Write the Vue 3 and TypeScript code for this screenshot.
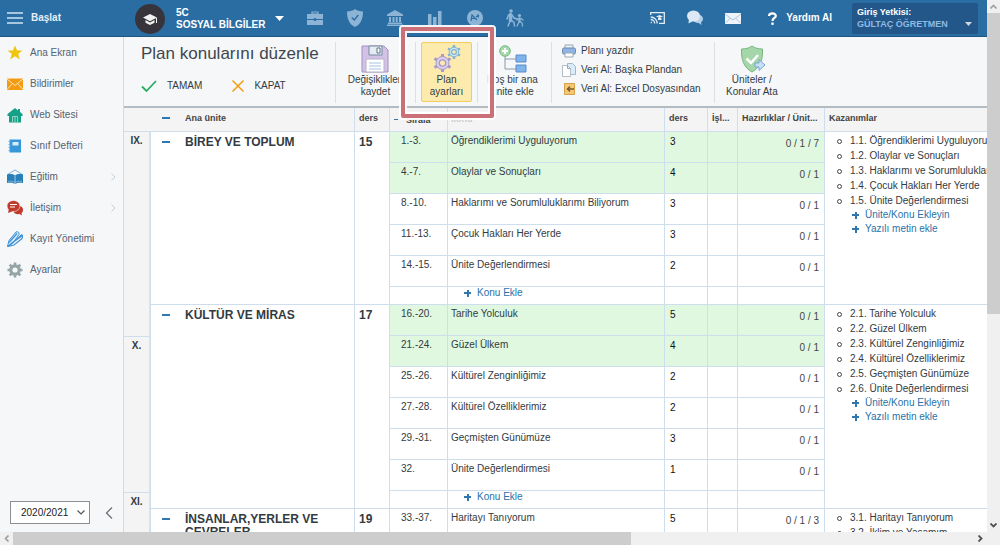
<script setup lang="ts">
import { ref } from 'vue'

interface Topic { range: string; name: string; hours: number; prep: string; done?: boolean }
interface Unit { id: number; name: string; hours: number; topics: Topic[] }

const menu = [
  { icon: 'star', label: 'Ana Ekran' },
  { icon: 'mail', label: 'Bildirimler' },
  { icon: 'home', label: 'Web Sitesi' },
  { icon: 'book', label: 'Sınıf Defteri' },
  { icon: 'edu', label: 'Eğitim', sub: true },
  { icon: 'talk', label: 'İletişim', sub: true },
  { icon: 'pens', label: 'Kayıt Yönetimi' },
  { icon: 'gear', label: 'Ayarlar' },
]

const units: Unit[] = [
  {
    id: 1, name: 'BİREY VE TOPLUM', hours: 15, topics: [
      { range: '1.-3.', name: 'Öğrendiklerimi Uyguluyorum', hours: 3, prep: '0 / 1 / 7', done: true },
      { range: '4.-7.', name: 'Olaylar ve Sonuçları', hours: 4, prep: '0 / 1', done: true },
      { range: '8.-10.', name: 'Haklarımı ve Sorumluluklarımı Biliyorum', hours: 3, prep: '0 / 1' },
      { range: '11.-13.', name: 'Çocuk Hakları Her Yerde', hours: 3, prep: '0 / 1' },
      { range: '14.-15.', name: 'Ünite Değerlendirmesi', hours: 2, prep: '0 / 1' },
    ],
  },
  {
    id: 2, name: 'KÜLTÜR VE MİRAS', hours: 17, topics: [
      { range: '16.-20.', name: 'Tarihe Yolculuk', hours: 5, prep: '0 / 1', done: true },
      { range: '21.-24.', name: 'Güzel Ülkem', hours: 4, prep: '0 / 1', done: true },
      { range: '25.-26.', name: 'Kültürel Zenginliğimiz', hours: 2, prep: '0 / 1' },
      { range: '27.-28.', name: 'Kültürel Özelliklerimiz', hours: 2, prep: '0 / 1' },
      { range: '29.-31.', name: 'Geçmişten Günümüze', hours: 3, prep: '0 / 1' },
      { range: '32.', name: 'Ünite Değerlendirmesi', hours: 1, prep: '0 / 1' },
    ],
  },
  {
    id: 3, name: 'İNSANLAR,YERLER VE ÇEVRELER', hours: 19, topics: [
      { range: '33.-37.', name: 'Haritayı Tanıyorum', hours: 5, prep: '0 / 1 / 3' },
      { range: '38.-42.', name: 'İklim ve Yaşamım', hours: 5, prep: '0 / 1' },
    ],
  },
]

const months = [
  { name: 'IX.', weeks: 205 },
  { name: 'X.', weeks: 156 },
  { name: 'XI.', weeks: 100 },
]

const year = ref('2020/2021')
</script>

<template>
  <div class="window">
    <div class="page">
      <header class="topbar">
        <button class="start">
          <svg width="16" height="12" viewBox="0 0 16 12"><path d="M0 1h16M0 6h16M0 11h16" stroke="#cfe2f2" stroke-width="1.6" /></svg>
          Başlat
        </button>
        <button class="course">
          <svg width="30" height="30" viewBox="0 0 30 30">
            <circle cx="15" cy="15" r="15" fill="#37353b" />
            <path d="M15 10l7 3.6-7 3.6-7-3.6zM10.500 16l4.500 2.400 4.500-2.400v2.800L15 21l-4.500-2.200zM21 14h1v5h-1z" fill="#f2f2f2" />
          </svg>
          <span class="course-name">5C<br />SOSYAL BİLGİLER</span>
          <svg width="9" height="5" viewBox="0 0 9 5"><path d="M0 0h9L4.500 5z" fill="#fff" /></svg>
        </button>
        <nav class="quick">
          <button aria-label="Çanta"><svg width="16" height="15" viewBox="0 0 16 15"><path d="M5 3V1h6v2M5.500 3h5" fill="none" stroke="#8db4d5" stroke-width="1.2" /><path d="M0 3h16v5H9.500a1.600 1.600 0 0 0-3 0H0zM0 9h6.500a1.600 1.600 0 0 0 3 0H16v5H0z" fill="#8db4d5" /></svg></button>
          <button aria-label="Güvenlik"><svg width="16" height="18" viewBox="0 0 16 18"><path d="M8 0c2 1.800 5 2.400 8 2.400C16 9.500 14 15 8 18 2 15 0 9.500 0 2.400 3 2.400 6 1.800 8 0z" fill="#8db4d5" /><path d="M4.800 8.500L7.300 11l4-5" fill="none" stroke="#2a6da3" stroke-width="1.4" /></svg></button>
          <button aria-label="Kurum"><svg width="16" height="16" viewBox="0 0 16 16"><path d="M8 0l8 4.500V6H0V4.500zM2 7h2v5H2zM5.500 7h2v5h-2zM8.700 7h2v5h-2zM12 7h2v5h-2zM1 12.500h14V14H1zM0 14.500h16V16H0z" fill="#8db4d5" /></svg></button>
          <button aria-label="İstatistik"><svg width="14" height="14" viewBox="0 0 14 14"><path d="M0 3h3.500v11H0zM5 6h3.500v8H5zM10 0h3.500v14H10z" fill="#8db4d5" /></svg></button>
          <button aria-label="Sınav"><svg width="16" height="16" viewBox="0 0 16 16"><circle cx="8" cy="8" r="8" fill="#8db4d5" /><path d="M4 11l1-6 5 5M5 8.500h3M9 7l3-2M10.500 4.500l1 3" fill="none" stroke="#2a6da3" stroke-width="1.2" /></svg></button>
          <button aria-label="Veliler"><svg width="18" height="18" viewBox="0 0 18 18" fill="none" stroke="#8db4d5" stroke-linecap="round"><circle cx="5" cy="2" r="1.800" fill="#8db4d5" stroke="none" /><circle cx="13.500" cy="6.500" r="1.600" fill="#8db4d5" stroke="none" /><path d="M4.500 5.500v6" stroke-width="3.400" /><path d="M4.500 11l-2.500 6M5 11l3 2.500.5 3.500M6 6l2 3 3 1M2.500 6L1 10" stroke-width="1.500" /><path d="M13.500 9.500v3" stroke-width="2.400" /><path d="M13.500 12l-2.500 5M13.500 12l2.500 2 .500 3M15 9.500l2 1.500M12.500 9.500L11 11" stroke-width="1.300" /></svg></button>
        </nav>
        <div class="tools">
          <button aria-label="Yayın"><svg width="15" height="12" viewBox="0 0 15 12" fill="none" stroke="#e4eef7" stroke-width="1.300"><path d="M.700 3V.700h13.600v10.600H9M.700 10.500h1.200M.700 7.500a4 4 0 0 1 4 4M.700 5a6.500 6.500 0 0 1 6.500 6.500" /><path d="M6 4.500L9.500 3 13 4.500 9.500 6zM8 6v2h3.500V6" fill="#e4eef7" stroke="none" /></svg></button>
          <button aria-label="Sohbet"><svg width="16" height="16" viewBox="0 0 16 16"><path d="M12 4.500c2.500.800 4 2.400 4 4.300 0 1.400-.700 2.600-2 3.400l.500 2.800-2.800-2c-2 0-3.700-.600-4.700-1.800z" fill="#b4cfe8" /><ellipse cx="6.500" cy="6" rx="6.500" ry="5.600" fill="#dce9f5" /><path d="M2 9l-.500 4.500L6 11z" fill="#dce9f5" /></svg></button>
          <button aria-label="Mesajlar"><svg width="16" height="11" viewBox="0 0 16 11"><path d="M0 0h16v11H0z" fill="#eef4fa" /><path d="M0 1l8 6 8-6M0 10.500L5.500 5M16 10.500L10.500 5" fill="none" stroke="#a9c4dd" /></svg></button>
        </div>
        <button class="help"><svg width="9" height="13" viewBox="0 0 9 13"><path d="M1 4C1 .500 8 .500 7.800 4 7.700 6 4.500 6 4.500 9" fill="none" stroke="#fff" stroke-width="2.200" /><rect x="3.300" y="10.500" width="2.400" height="2.400" fill="#fff" /></svg>Yardım Al</button>
        <button class="role">
          <span class="role-text"><span>Giriş Yetkisi:</span><span class="role-name">GÜLTAÇ ÖĞRETMEN</span></span>
          <svg width="7" height="4" viewBox="0 0 7 4"><path d="M0 0h7L3.500 4z" fill="#d0d8df" /></svg>
        </button>
      </header>

      <div class="body">
        <aside class="sidebar">
          <nav>
            <a v-for="m in menu" :key="m.label" href="#" class="menu-item">
              <svg width="16" height="16" viewBox="0 0 16 16">
                <path v-if="m.icon === 'star'" d="M8 .500l2.100 5h5.400l-4.300 3.400 1.600 5.600L8 11.200l-4.800 3.300 1.600-5.600L.500 5.500h5.400z" fill="#f1c40f" />
                <g v-else-if="m.icon === 'mail'"><path d="M0 2.500h16v11.500H0z" fill="#f39c12" /><path d="M0 3l8 6.500L16 3M0 13.500l5.500-6M16 13.500l-5.500-6" fill="none" stroke="#fbe3bd" /></g>
                <g v-else-if="m.icon === 'home'"><path d="M8 1L.500 7v2H2v6.500h12V9h1.500V7L13 5V2h-2v1.500z" fill="#16a085" /><path d="M5.500 15.500V9.500h5v6M8 10v5.500" fill="none" stroke="#8fd6c7" /></g>
                <g v-else-if="m.icon === 'book'"><path d="M2.500 1.500h11.500v13H2.500z" fill="#3498db" /><path d="M5.500 4h6v3.500h-6z" fill="#d8ecf9" /><path d="M1.500 3.500h2M1.500 6.500h2M1.500 9.500h2M1.500 12.500h2" stroke="#6fb3e4" /></g>
                <g v-else-if="m.icon === 'edu'"><path d="M.500 5.500L8 1l7.500 4.500" fill="none" stroke="#79b3dc" /><path d="M0 5.500c3-.800 6-.500 8 1 2-1.500 5-1.800 8-1V14c-3-.500-6-.500-8 1-2-1.500-5-1.500-8-1z" fill="#2980b9" /><path d="M8 6.500V15" stroke="#bcdcf2" stroke-width=".8" /><path d="M1 12.500c3-.500 5-.300 7 1 2-1.300 4-1.500 7-1" fill="none" stroke="#8cc0e4" stroke-width=".7" /></g>
                <g v-else-if="m.icon === 'talk'"><path d="M13 6c2 .500 3 2 3 4 0 1.300-.500 2.200-1.500 3l.500 2.500-2.500-1.500c-3 .500-5.500-.500-6-2.500z" fill="#c0392b" /><ellipse cx="6.500" cy="6" rx="6.500" ry="5.500" fill="#c0392b" stroke="#f5f7f9" stroke-width=".6" /><path d="M2 8.500L1 13l5-2z" fill="#c0392b" /><path d="M3 4.500h7M3 7h5" stroke="#fff" /></g>
                <g v-else-if="m.icon === 'pens'" fill="none" stroke="#3f92d6"><path d="M.500 15.500l1.500-6L9 1c2-1 3.500.500 3 2.500L6 12z" fill="#d7eafa" /><path d="M.500 15.500l5-3.500 9.500-8.500M2 11.500L10 2.500M3.500 13L15.500 4.500c.500 2-.500 3-1 3.500L7 14l-6.500 1.500" stroke-width="1.200" /></g>
                <g v-else><circle cx="8" cy="8" r="4.200" fill="none" stroke="#95a5a6" stroke-width="3.200" /><path d="M8 .500v3M8 12.500v3M.500 8h3M12.500 8h3M2.700 2.700l2 2M11.300 11.300l2 2M2.700 13.300l2-2M11.300 4.700l2-2" stroke="#95a5a6" stroke-width="2.600" /></g>
              </svg>
              <span class="menu-label">{{ m.label }}</span>
              <svg v-if="m.sub" width="5" height="8" viewBox="0 0 5 8"><path d="M.500.500L4 4 .500 7.500" fill="none" stroke="#c9ced3" /></svg>
            </a>
          </nav>
          <div class="side-foot">
            <label class="year">
              <select v-model="year" aria-label="Öğretim yılı"><option>2020/2021</option></select>
              <svg width="8" height="5" viewBox="0 0 8 5"><path d="M.500.500L4 4 7.500.500" fill="none" stroke="#555" stroke-width="1.200" /></svg>
            </label>
            <button class="collapse" aria-label="Daralt"><svg width="8" height="12" viewBox="0 0 8 12"><path d="M7 .500L1.500 6 7 11.500" fill="none" stroke="#6b7379" stroke-width="1.300" /></svg></button>
          </div>
        </aside>

        <main class="content">
          <section class="toolbar">
            <div class="heading">
              <h1>Plan konularını düzenle</h1>
              <div class="actions">
                <button><svg width="16" height="12" viewBox="0 0 16 12"><path d="M1 6.500L5.500 11 15 1" fill="none" stroke="#27ae60" stroke-width="1.800" /></svg>TAMAM</button>
                <button><svg width="12" height="12" viewBox="0 0 12 12"><path d="M.500.500l11 11M11.500.500l-11 11" fill="none" stroke="#f39c12" stroke-width="1.500" /></svg>KAPAT</button>
              </div>
            </div>
            <div class="group save">
              <button class="big"><svg width="28" height="28" viewBox="0 0 28 28"><path d="M1 1h22l4 4v22H1z" fill="#d3c2e6" stroke="#a48fc0" /><path d="M8 1h13v9H8z" fill="#e6ecf2" stroke="#7488a0" /><path d="M16 3h3v5h-3z" fill="#fff" stroke="#5d7590" /><path d="M5 14h18v13H5z" fill="#fff" stroke="#b5b0c8" /><path d="M8 18h12M8 21h12M8 24h12" stroke="#a5c3de" /></svg><span>Değişiklikleri<br />kaydet</span></button>
            </div>
            <div class="group settings">
              <button class="big active"><svg width="28" height="28" viewBox="0 0 28 28">
                <g fill="none" stroke="#a899c8"><path d="M9.500 9v3M9.500 24v3M1.500 13.500l3 1.700M14.500 20.700l3 1.700M1.500 22.500l3-1.700M14.500 15.200l3-1.700" stroke-width="3" /><circle cx="9.500" cy="18" r="6.500" fill="#d9cfee" /><circle cx="9.500" cy="18" r="3.200" fill="#fdebae" stroke-width="1.300" /></g>
                <g fill="none" stroke="#7fb2cf"><path d="M21 0v2M21 12v2M15 3.500l1.800 1M25.200 9.500l1.800 1M15 10.500l1.800-1M25.200 4.500l1.800-1" stroke-width="2.500" /><circle cx="21" cy="7" r="4.800" fill="#c9e6f5" /><circle cx="21" cy="7" r="2.400" fill="#fdebae" stroke-width="1.200" /></g>
              </svg><span>Plan<br />ayarları</span></button>
              <span class="callout"></span>
            </div>
            <div class="group add">
              <button class="big"><svg width="28" height="28" viewBox="0 0 28 28"><path d="M6 10v14h11M6 14h11" fill="none" stroke="#8a9aa8" /><path d="M17 10h10v7H17zM17 20h10v7H17z" fill="#7fb3ea" stroke="#5a8ccb" /><circle cx="6" cy="6" r="5.300" fill="#a6d9ab" stroke="#77b780" /><path d="M6 3v6M3 6h6" stroke="#fff" stroke-width="1.800" /></svg><span>Boş bir ana<br />ünite ekle</span></button>
            </div>
            <div class="group imports">
              <button><svg width="14" height="14" viewBox="0 0 14 14"><path d="M3 1h8v4H3z" fill="#eef3f7" stroke="#9ba7b2" /><rect x=".5" y="4" width="13" height="6" rx="1.500" fill="#8fb5e6" stroke="#6c87aa" /><path d="M3 9h8v4H3z" fill="#fff" stroke="#9ba7b2" /></svg>Planı yazdır</button>
              <button><svg width="14" height="14" viewBox="0 0 14 14"><path d="M5.500.500h5l3 3v8h-8z" fill="#d9ecfa" stroke="#9cb9cf" /><path d="M.500 2.500h5l3 3v8h-8z" fill="#fff" stroke="#b5bec6" /><path d="M5.500 2.500v3h3" fill="none" stroke="#8fa5b8" /></svg>Veri Al: Başka Plandan</button>
              <button><svg width="14" height="14" viewBox="0 0 14 14"><path d="M2.500 1.500h10v11h-10z" fill="#f7c873" stroke="#d5a048" /><path d="M12 7H5.500M8 4.500L5.500 7 8 9.500" fill="none" stroke="#7c5a2c" stroke-width="1.500" /></svg>Veri Al: Excel Dosyasından</button>
            </div>
            <div class="group assign">
              <button class="big"><svg width="28" height="28" viewBox="0 0 28 28"><path d="M14 1c3 2.200 6.500 3 10.500 3C25 14 22.500 22.500 14 27 5.500 22.500 3 14 3.500 4 7.500 4 11 3.200 14 1z" fill="#a5d6a9" stroke="#79b67f" /><path d="M8.500 13.500l4.500 4.500 7-8" fill="none" stroke="#fff" stroke-width="2.500" /><path d="M17 18h4v-3.500l6 5.500-6 5.500V22h-4z" fill="#c5e1f7" stroke="#7aa5cf" /></svg><span>Üniteler /<br />Konular Ata</span></button>
            </div>
          </section>

          <section class="plan">
            <div class="months">
              <div class="month-head"></div>
              <div v-for="m in months" :key="m.name" class="month" :style="{ height: m.weeks + 'px' }">{{ m.name }}</div>
            </div>
            <table>
              <colgroup><col class="c-unit" /><col class="c-h" /><col class="c-no" /><col class="c-topic" /><col class="c-hours" /><col class="c-done" /><col class="c-prep" /><col /></colgroup>
              <thead>
                <tr>
                  <th><span class="unit-cell"><i class="minus"></i>Ana ünite</span></th>
                  <th>ders</th>
                  <th class="no-head"><span class="no-cell"><i class="minus small"></i>Sırala</span></th>
                  <th class="faint">konu</th>
                  <th>ders</th>
                  <th>İşl...</th>
                  <th>Hazırlıklar / Ünit...</th>
                  <th>Kazanımlar</th>
                </tr>
              </thead>
              <tbody v-for="u in units" :key="u.id">
                <tr v-for="(t, i) in u.topics" :key="t.range" :class="{ done: t.done }">
                  <td v-if="i === 0" :rowspan="u.topics.length + 1" class="unit"><span class="unit-cell"><i class="minus"></i><span>{{ u.name }}</span></span></td>
                  <td v-if="i === 0" :rowspan="u.topics.length + 1" class="unit hours-total">{{ u.hours }}</td>
                  <td class="no">{{ t.range }}</td>
                  <td class="topic">{{ t.name }}</td>
                  <td class="hours">{{ t.hours }}</td>
                  <td></td>
                  <td class="prep">{{ t.prep }}</td>
                  <td v-if="i === 0" :rowspan="u.topics.length + 1" class="goals">
                    <ul>
                      <li v-for="(g, n) in u.topics" :key="g.range">{{ u.id }}.{{ n + 1 }}. {{ g.name }}</li>
                    </ul>
                    <a href="#"><i class="plus"></i>Ünite/Konu Ekleyin</a>
                    <a href="#"><i class="plus"></i>Yazılı metin ekle</a>
                  </td>
                </tr>
                <tr class="add-row">
                  <td></td>
                  <td><a href="#"><i class="plus"></i>Konu Ekle</a></td>
                  <td></td><td></td><td></td>
                </tr>
              </tbody>
            </table>
          </section>
        </main>
      </div>
    </div>

    <div class="bar vertical">
      <button aria-label="Yukarı"><svg width="7" height="5" viewBox="0 0 7 5"><path d="M.500 4.500l3-3 3 3" fill="none" stroke="#a0a0a0" stroke-width="1.600" /></svg></button>
      <div class="track"><div class="thumb"></div></div>
      <button aria-label="Aşağı"><svg width="7" height="5" viewBox="0 0 7 5"><path d="M.500.500l3 3 3-3" fill="none" stroke="#505050" stroke-width="1.800" /></svg></button>
    </div>
    <div class="bar horizontal">
      <button aria-label="Sola"><svg width="5" height="7" viewBox="0 0 5 7"><path d="M4.500.500l-3 3 3 3" fill="none" stroke="#a0a0a0" stroke-width="1.600" /></svg></button>
      <div class="track"><div class="thumb"></div></div>
      <button aria-label="Sağa"><svg width="5" height="7" viewBox="0 0 5 7"><path d="M.500.500l3 3-3 3" fill="none" stroke="#505050" stroke-width="1.800" /></svg></button>
    </div>
    <div class="corner"></div>
  </div>
</template>

<style>
body { margin: 0; overflow: hidden; }
</style>

<style scoped>
.window {
  height: 100vh;
  display: grid;
  grid-template: minmax(0, 1fr) 13px / minmax(0, 1fr) 13px;
  font: 10px/12px "Liberation Sans", Arial, sans-serif;
  color: #333b42;
}
* { box-sizing: border-box; }
button { border: 0; padding: 0; margin: 0; background: none; font: inherit; color: inherit; display: flex; align-items: center; }
a { text-decoration: none; color: #2a71a8; }
svg { flex: none; display: block; }

.page { display: flex; flex-direction: column; overflow: hidden; }
.topbar { height: 37px; flex: none; display: flex; align-items: center; background: #2a6da3; border-bottom: 1px solid #1d5684; color: #fff; font-weight: bold; padding-right: 9px; }
.start { gap: 8px; margin-left: 7px; width: 128px; color: #e3eef8; }
.course { gap: 11px; width: 160px; text-align: left; padding-top: 2px; }
.course svg:last-child { margin-left: -1px; margin-bottom: 2px; }
.quick { display: flex; flex: 1; }
.quick button { width: 40px; justify-content: center; }
.tools { display: flex; }
.tools button { width: 38px; justify-content: center; }
.help { gap: 9px; margin: 0 20px 0 16px; }
.role { width: 126px; height: 31px; background: #23578a; border-radius: 2px; padding: 0 6px 0 5px; font-size: 9px; text-align: left; justify-content: space-between; }
.role svg { margin-top: 12px; }
.role-text { display: flex; flex-direction: column; }
.role-name { color: #8fbbe2; white-space: nowrap; }

.body { flex: 1; min-height: 0; display: flex; }
.sidebar { width: 123px; flex: none; background: #f5f7f9; display: flex; flex-direction: column; justify-content: space-between; }
.menu-item { display: flex; align-items: center; height: 31px; padding: 0 7px; gap: 7px; color: #566270; }
.menu-label { flex: 1; }
.side-foot { display: flex; align-items: center; padding: 0 10px 8px; gap: 15px; }
.year { display: flex; align-items: center; width: 81px; height: 23px; border: 1px solid #8b8f93; background: #fff; padding-right: 4px; }
.year select { flex: 1; min-width: 0; height: 21px; border: 0; background: none; appearance: none; font: inherit; color: #222; padding: 0 0 0 10px; }

.content { flex: 1; min-width: 0; display: flex; flex-direction: column; border-left: 1px solid #d5dadf; }
.toolbar { display: flex; height: 71px; flex: none; background: #f5f7f9; border-bottom: 2px solid #b4bcc3; padding: 5px 0 3px; }
.heading { width: 211px; padding-left: 17px; }
h1 { font-size: 17px; line-height: 24px; font-weight: normal; margin: 0; white-space: nowrap; color: #3f474e; }
.actions { display: flex; gap: 30px; padding-top: 14px; }
.actions button { gap: 10px; }
.group { border-left: 1px solid #dbe0e4; display: flex; justify-content: center; }
.big { flex-direction: column; justify-content: flex-start; padding-top: 3px; text-align: center; white-space: nowrap; }
.big span { padding-top: 1px; }
.save { width: 80px; }
.settings { width: 62px; position: relative; }
.add { width: 74px; padding-right: 4px; }
.imports { width: 163px; flex-direction: column; justify-content: flex-start; align-items: flex-start; gap: 7px; padding: 3px 0 0 10px; }
.imports button { gap: 5px; white-space: nowrap; }
.imports svg { margin: -1px 0; }
.assign { padding-left: 11px; }
.active { width: 51px; height: 60px; background: #fdebae; border: 1px solid #f3cc5c; border-radius: 2px; padding-top: 2px; }
.callout { position: absolute; z-index: 5; left: -15px; top: -15px; width: 93px; height: 91px; border: 4px solid #cb7076; border-radius: 2px; box-shadow: 0 0 0 2px #fffffff0, inset 0 0 0 2px #fffffff0; pointer-events: none; }

.plan { flex: 1; min-height: 0; display: flex; overflow: hidden; background: #fff; }
.months { width: 26px; flex: none; background: #f4f4f4; }
.month-head { height: 23px; }
.month { border-top: 1px solid #cfdeec; border-right: 1px solid #d7e4f1; padding-top: 3px; text-align: center; font-weight: bold; }
table { flex: 1; min-width: 0; align-self: flex-start; table-layout: fixed; border-spacing: 0; width: 100%; }
.c-unit { width: 204px; } .c-h { width: 35px; } .c-no { width: 58px; } .c-topic { width: 217px; }
.c-hours { width: 43px; } .c-done { width: 30px; } .c-prep { width: 87px; }
th { height: 23px; background: #f4f4f4; font-size: 9px; line-height: 12px; text-align: left; padding: 0 0 3px 4px; border-left: 1px solid #cfdeec; white-space: nowrap; overflow: hidden; color: #444; }
th:first-child { border-left-color: #f4f4f4; }
th.no-head { padding-top: 1px; padding-bottom: 0; }
th.faint { color: #ccc; padding-left: 3px; padding-bottom: 1px; }
td { height: 31px; vertical-align: top; border-top: 1px solid #cfdeec; border-left: 1px solid #cfdeec; padding: 3px 5px 0 3px; }
td.unit:first-child, th:first-child { padding-left: 11px; }
.unit-cell { display: flex; align-items: baseline; gap: 15px; }
.no-cell { display: flex; align-items: center; gap: 8px; }
.minus { width: 8px; height: 2px; flex: none; background: #2f77ae; align-self: flex-start; margin-top: 5px; }
.minus.small { width: 4px; height: 1px; }
.unit { font-size: 12px; line-height: 13px; font-weight: bold; padding-top: 4px; }
.hours-total { font-size: 12px; padding-left: 4px; }
.done td.no, .done td.topic, .done td.hours, .done td.hours ~ td:not(.goals) { background: #e0f8e0; }
.no { padding-left: 11px; }
.topic { padding-top: 3px; }
.hours { padding: 4px 0 0 5px; color: #111; }
.prep { padding-top: 6px; text-align: right; color: #444; }
.add-row td { height: 18px; padding: 1px 0 0 16px; line-height: 10px; }
.add-row a { display: flex; align-items: center; gap: 6px; height: 10px; }
.goals { padding: 1px 0 0; overflow: hidden; white-space: nowrap; }
.goals ul { margin: 0; padding: 0 0 0 12px; list-style: none; line-height: 15px; }
.goals li { display: flex; align-items: center; gap: 8px; }
.goals li::before { content: ""; box-sizing: border-box; flex: none; width: 5px; height: 5px; border: 1px solid #444; border-radius: 50%; margin-top: 2px; }
.goals a { display: flex; align-items: center; gap: 6px; padding-left: 27px; line-height: 14px; }
.plus { flex: none; width: 7px; height: 7px; background: linear-gradient(#2f77ae, #2f77ae) center / 7px 2px no-repeat, linear-gradient(#2f77ae, #2f77ae) center / 2px 7px no-repeat; }

.bar { display: flex; background: #f0f0f0; }
.bar button { width: 13px; height: 13px; flex: none; justify-content: center; }
.vertical { flex-direction: column; }
.track { flex: 1; display: flex; }
.vertical .track { flex-direction: column; }
.thumb { background: #cdcdcd; }
.vertical .thumb { height: 59.4%; }
.horizontal .thumb { width: 64.3%; }
.corner { background: #f0f0f0; }
</style>
